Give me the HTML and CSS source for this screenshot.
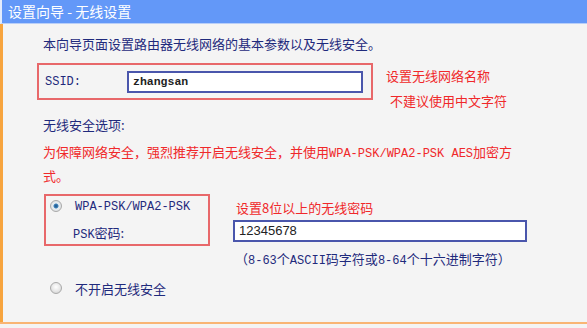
FILE: index.html
```html
<!DOCTYPE html>
<html lang="zh-CN">
<head>
    <meta charset="UTF-8">
    <meta name="viewport" content="width=device-width, initial-scale=1.0">
    <title>设置向导 - 无线设置</title>
    <link rel="stylesheet" href="styles.css">
</head>
<body>
    <div class="wizard">
        <div class="title">设置向导 - 无线设置</div>

        <div class="panel">
            <p class="intro">本向导页面设置路由器无线网络的基本参数以及无线安全。</p>

            <div class="ssid-row">
                <div class="mark-box ssid-box">
                    <span class="en label">SSID:</span>
                    <div class="field ssid-field">zhangsan</div>
                </div>
                <div class="hint ssid-hint">
                    <div>设置无线网络名称</div>
                    <div class="indent">不建议使用中文字符</div>
                </div>
            </div>

            <p class="section">无线安全选项:</p>
            <p class="warn">为保障网络安全，强烈推荐开启无线安全，并使用<span class="en">WPA-PSK/WPA2-PSK AES</span>加密方<br>式。</p>

            <div class="psk-row">
                <div class="mark-box psk-box">
                    <div class="opt"><span class="radio on"></span><span class="en">WPA-PSK/WPA2-PSK</span></div>
                    <div class="pw-label"><span class="en">PSK</span>密码:</div>
                </div>
                <div class="psk-right">
                    <div class="hint pw-hint">设置8位以上的无线密码</div>
                    <div class="field pw-field">12345678</div>
                    <div class="note">（<span class="en">8-63</span>个<span class="en">ASCII</span>码字符或<span class="en">8-64</span>个十六进制字符）</div>
                </div>
            </div>

            <div class="opt off-opt"><span class="radio"></span>不开启无线安全</div>
        </div>

        <div class="footer">
            <span class="btn btn-next"></span>
            <span class="btn btn-cancel"></span>
        </div>
    </div>
</body>
</html>
```

FILE: styles.css
```css
body {
    margin: 0;
    font-family: "Noto Sans CJK SC", "Liberation Sans", sans-serif;
    font-size: 13px;
    color: #1f2a7c;
    background-color: #f4f4f4;
}
p {
    margin: 0;
}
.wizard {
    width: 587px;
    height: 328px;
    overflow: hidden;
}
.title {
    height: 23px;
    line-height: 23px;
    padding-left: 6px;
    border-left: 2px solid #e4ecfc;
    background-color: #6398f8;
    color: white;
    font-size: 14px;
    border-bottom: 1px solid #b9cff8;
}
.panel {
    height: 298px;
    box-sizing: border-box;
    border-left: 3px solid #f7a43e;
    padding: 10px 0 0 40px;
}
.en {
    font-family: "Liberation Mono", monospace;
    font-size: 12px;
}
.intro {
    line-height: 20px;
}
.ssid-row {
    display: flex;
    height: 37px;
    margin-top: 9px;
    margin-left: -6px;
}
.mark-box {
    border: 2px solid #e8686a;
    box-sizing: border-box;
}
.ssid-box {
    width: 336px;
    height: 37px;
    display: flex;
    align-items: center;
    padding: 0 8px 0 6px;
}
.ssid-box .label {
    width: 82px;
}
.field {
    background-color: white;
    border: 2px solid #4a56ac;
    box-sizing: border-box;
    height: 22px;
    line-height: 18px;
    padding-left: 4px;
}
.ssid-field {
    flex: 1;
    font-family: "Liberation Mono", monospace;
    font-weight: bold;
    font-size: 11.5px;
    color: #222;
}
.hint {
    color: #f0282a;
}
.ssid-hint {
    margin-left: 13px;
    line-height: 25px;
}
.ssid-hint .indent {
    padding-left: 4px;
}
.section {
    margin-top: 14px;
    line-height: 21px;
}
.warn {
    margin-top: 6px;
    line-height: 21px;
    color: #f0282a;
}
.psk-row {
    display: flex;
    margin-top: 8px;
    margin-left: 1px;
}
.psk-box {
    width: 166px;
    height: 52px;
    padding-left: 4px;
}
.opt {
    display: flex;
    align-items: center;
    height: 22px;
}
.radio {
    width: 12px;
    height: 12px;
    border-radius: 50%;
    box-sizing: border-box;
    border: 1px solid #a9a9a9;
    background: radial-gradient(circle at 50% 40%, #ffffff 0%, #e6e6e6 55%, #c9c9c9 100%);
    margin-right: 13px;
}
.radio.on {
    background: radial-gradient(circle, #1d4f86 0%, #3a80b8 28%, #e9eef2 42%, #d4d4d4 100%);
    margin-top: -2px;
}
.pw-label {
    margin-top: 4px;
    padding-left: 23px;
    line-height: 22px;
}
.psk-right {
    margin-left: 23px;
    width: 294px;
}
.pw-hint {
    padding: 2px 0 0 3px;
    line-height: 24px;
}
.pw-field {
    font-family: "Liberation Sans", sans-serif;
    font-size: 13px;
    color: #222;
}
.note {
    margin-top: 7px;
    padding-left: 2px;
    line-height: 20px;
    white-space: nowrap;
}
.off-opt {
    margin: 6px 0 0 7px;
}
.footer {
    height: 7px;
    border-top: 2px solid #f9b574;
    display: flex;
    justify-content: flex-end;
    align-items: flex-end;
    gap: 8px;
}
.btn {
    height: 2px;
    border-radius: 2px 2px 0 0;
}
.btn-next {
    width: 61px;
    background-color: #6f8ddb;
}
.btn-cancel {
    width: 74px;
    background-color: #e6707a;
}
```
